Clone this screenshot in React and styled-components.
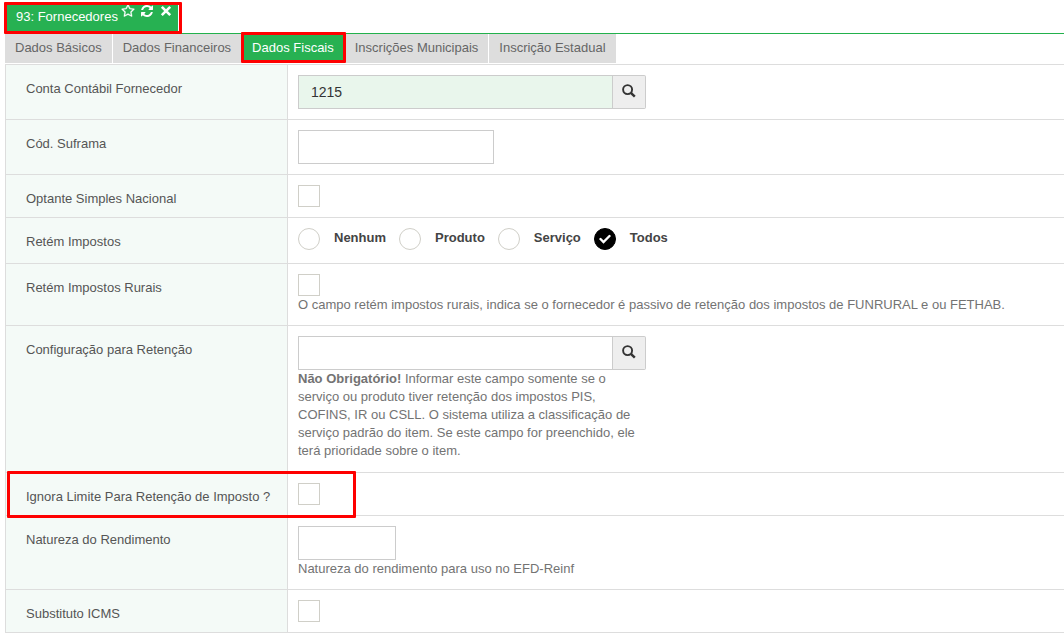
import React, { useState } from "react";
import styled, { createGlobalStyle, css } from "styled-components";

const GlobalStyle = createGlobalStyle`
  * {
    box-sizing: border-box;
  }

  body {
    margin: 0;
    background: #fff;
    color: #555;
    font-family: "Liberation Sans", Arial, sans-serif;
    font-size: 13px;
    line-height: 18px;
  }
`;

const Page = styled.div`
  padding: 4px 0 0 5px;
`;

const WindowBar = styled.header`
  display: flex;
  height: 30px;
  border-bottom: 1px solid #22b14c;
`;

const WindowTab = styled.div`
  position: relative;
  display: flex;
  padding: 0 5px 0 11px;
  background: #27b152;
  color: #fff;
`;

const WindowTitle = styled.span`
  padding-top: 4px;
  margin-right: 3px;
`;

const WindowActions = styled.div`
  display: flex;
  align-items: flex-start;
  gap: 5px;
`;

const IconButton = styled.button`
  display: flex;
  padding: 0;
  border: 0;
  background: none;
  color: inherit;
  cursor: pointer;
`;

const Highlight = styled.div`
  position: absolute;
  z-index: 1;
  inset: ${(props) => props.$inset || "-2px -4px -1px -1px"};
  ${(props) => props.$width && `width: ${props.$width};`}
  border: 3px solid #fe0000;
  border-radius: 1px;
  pointer-events: none;
`;

const TabList = styled.nav`
  display: flex;
  gap: 1px;
  margin-bottom: 1px;
`;

const Tab = styled.button`
  position: relative;
  height: 29px;
  padding: 0 10px 2px;
  border: 0;
  background: #ddd;
  color: #666;
  font: inherit;
  white-space: nowrap;
  cursor: pointer;

  ${(props) =>
    props.$active &&
    css`
      background: #27b152;
      color: #fff;
    `}
`;

const Form = styled.form`
  border-left: 1px solid #ddd;
  border-bottom: 1px solid #ddd;
`;

const Row = styled.div`
  position: relative;
  display: grid;
  grid-template-columns: 282px 1fr;
  border-top: 1px solid #ddd;
`;

const LabelCell = styled.div`
  padding: 15px 10px 0 20px;
  border-right: 1px solid #ddd;
  background: #f4faf7;
`;

const FieldCell = styled.div`
  padding: 10px;
`;

const TextInput = styled.input`
  display: block;
  width: ${(props) => props.$width};
  height: 34px;
  padding: 0 12px;
  border: 1px solid #ccc;
  border-radius: 0;
  background: ${(props) => (props.$filled ? "#e9f6ec" : "#fff")};
  color: #333;
  font: inherit;
  font-size: 14px;
  outline: none;
`;

const SearchGroup = styled.div`
  display: flex;
`;

const SearchButton = styled.button`
  display: flex;
  align-items: center;
  justify-content: center;
  width: 33px;
  height: 34px;
  padding: 0 0 2px;
  border: 1px solid #ccc;
  border-left: 0;
  border-radius: 0 2px 2px 0;
  background: #eee;
  color: #333;
  cursor: pointer;
`;

const Checkbox = styled.input`
  appearance: none;
  display: block;
  width: 22px;
  height: 22px;
  margin: 0;
  border: 1px solid #d0cfc8;
  background: #fff;

  &:checked {
    background: #000;
  }
`;

const RadioGroup = styled.div`
  display: flex;
  gap: 13px;
  height: 25px;
`;

const RadioLabel = styled.label`
  display: flex;
  align-items: flex-start;
  gap: 14px;
  color: #444;
  font-weight: bold;
  line-height: 20px;
`;

const RadioMark = styled.span`
  position: relative;
  width: 22px;
  height: 22px;

  svg {
    position: absolute;
    top: 6px;
    left: 5px;
    pointer-events: none;
  }
`;

const Radio = styled.input`
  appearance: none;
  display: block;
  width: 22px;
  height: 22px;
  margin: 0;
  border: 1px solid #d0cfc8;
  border-radius: 50%;
  background: #fff;

  &:checked {
    border-color: #000;
    background: #000;
  }
`;

const Help = styled.p`
  margin: 0;
  padding-bottom: ${(props) => (props.$narrow ? "2px" : "1px")};
  max-width: ${(props) => (props.$narrow ? "348px" : "none")};
  color: #737373;
`;

const StarIcon = () => (
  <svg width="14" height="14" viewBox="0 0 1792 1792" fill="currentColor" aria-hidden="true">
    <path
      d="M1201 1004l306-297-422-62-189-382-189 382-422 62 306 297-73 421 378-199 377 199zm527-357q0 22-26 48l-363 354 86 500q1 7 1 20 0 50-41 50-19 0-40-12l-449-236-449 236q-22 12-40 12-21 0-31.5-14.5t-10.5-35.5q0-6 2-20l86-500-364-354q-25-27-25-48 0-37 56-46l502-73 225-455q19-41 49-41t49 41l225 455 502 73q56 9 56 46z"
      stroke="currentColor"
      strokeWidth="40"
    />
  </svg>
);

const RefreshIcon = () => (
  <svg width="14" height="14" viewBox="0 0 1792 1792" fill="currentColor" aria-hidden="true">
    <path d="M1639 1056q0 5-1 7-64 268-268 434.5t-478 166.5q-146 0-282.5-55t-243.5-157l-129 129q-19 19-45 19t-45-19-19-45v-448q0-26 19-45t45-19h448q26 0 45 19t19 45-19 45l-137 137q71 66 161 102t187 36q134 0 250-65t186-179q11-17 53-117 8-23 30-23h192q13 0 22.5 9.5t9.5 22.5zm25-800v448q0 26-19 45t-45 19h-448q-26 0-45-19t-19-45 19-45l138-138q-148-137-349-137-134 0-250 65t-186 179q-11 17-53 117-8 23-30 23h-199q-13 0-22.5-9.5t-9.5-22.5v-7q65-268 270-434.5t480-166.5q146 0 284 55.5t245 156.5l130-129q19-19 45-19t45 19 19 45z" />
  </svg>
);

const CloseIcon = () => (
  <svg width="14" height="14" viewBox="0 0 14 14" fill="none" aria-hidden="true">
    <path d="M2.8 2.8L11.2 11.2M11.2 2.8L2.8 11.2" stroke="currentColor" strokeWidth="2.6" />
  </svg>
);

const SearchIcon = () => (
  <svg width="14" height="14" viewBox="0 0 14 14" fill="none" stroke="currentColor" aria-hidden="true">
    <circle cx="5.6" cy="5.6" r="4.5" strokeWidth="1.9" />
    <path d="M8.9 8.9L12.8 12.6" strokeWidth="2.5" />
  </svg>
);

const tabs = [
  "Dados Básicos",
  "Dados Financeiros",
  "Dados Fiscais",
  "Inscrições Municipais",
  "Inscrição Estadual",
];

const taxOptions = ["Nenhum", "Produto", "Serviço", "Todos"];

const Field = ({ id, label, highlighted, children }) => (
  <Row>
    <LabelCell>
      <label htmlFor={id}>{label}</label>
    </LabelCell>
    <FieldCell>{children}</FieldCell>
    {highlighted && <Highlight $inset="-2px auto -3px 1px" $width="349px" />}
  </Row>
);

const SearchField = ({ id, defaultValue }) => (
  <SearchGroup>
    <TextInput id={id} $width="315px" $filled={Boolean(defaultValue)} defaultValue={defaultValue} />
    <SearchButton type="button" aria-label="Pesquisar">
      <SearchIcon />
    </SearchButton>
  </SearchGroup>
);

const App = () => {
  const [activeTab, setActiveTab] = useState("Dados Fiscais");
  const [tax, setTax] = useState("Todos");

  return (
    <>
      <GlobalStyle />
      <Page>
        <WindowBar>
          <WindowTab>
            <WindowTitle>93: Fornecedores</WindowTitle>
            <WindowActions>
              <IconButton type="button" aria-label="Favoritar">
                <StarIcon />
              </IconButton>
              <IconButton type="button" aria-label="Atualizar">
                <RefreshIcon />
              </IconButton>
              <IconButton type="button" aria-label="Fechar">
                <CloseIcon />
              </IconButton>
            </WindowActions>
            <Highlight />
          </WindowTab>
        </WindowBar>

        <TabList>
          {tabs.map((tab) => (
            <Tab
              key={tab}
              type="button"
              $active={tab === activeTab}
              onClick={() => setActiveTab(tab)}
            >
              {tab}
              {tab === activeTab && <Highlight $inset="-2px -2px 0 -1px" />}
            </Tab>
          ))}
        </TabList>

        <Form>
          <Field id="conta" label="Conta Contábil Fornecedor">
            <SearchField id="conta" defaultValue="1215" />
          </Field>
          <Field id="suframa" label="Cód. Suframa">
            <TextInput id="suframa" $width="196px" />
          </Field>
          <Field id="simples" label="Optante Simples Nacional">
            <Checkbox id="simples" type="checkbox" />
          </Field>
          <Row>
            <LabelCell id="impostos">Retém Impostos</LabelCell>
            <FieldCell>
              <RadioGroup role="radiogroup" aria-labelledby="impostos">
                {taxOptions.map((option) => (
                  <RadioLabel key={option}>
                    <RadioMark>
                      <Radio
                        type="radio"
                        name="impostos"
                        checked={tax === option}
                        onChange={() => setTax(option)}
                      />
                      {tax === option && (
                        <svg width="12" height="10" viewBox="0 0 12 10" fill="none">
                          <path
                            d="M1.5 5L4.5 8L10.5 2"
                            stroke="#fff"
                            strokeWidth="2.4"
                            strokeLinecap="round"
                          />
                        </svg>
                      )}
                    </RadioMark>
                    {option}
                  </RadioLabel>
                ))}
              </RadioGroup>
            </FieldCell>
          </Row>
          <Field id="rurais" label="Retém Impostos Rurais">
            <Checkbox id="rurais" type="checkbox" />
            <Help>
              O campo retém impostos rurais, indica se o fornecedor é passivo de retenção dos
              impostos de FUNRURAL e ou FETHAB.
            </Help>
          </Field>
          <Field id="retencao" label="Configuração para Retenção">
            <SearchField id="retencao" />
            <Help $narrow>
              <strong>Não Obrigatório!</strong> Informar este campo somente se o serviço ou produto
              tiver retenção dos impostos PIS, COFINS, IR ou CSLL. O sistema utiliza a
              classificação de serviço padrão do item. Se este campo for preenchido, ele terá
              prioridade sobre o item.
            </Help>
          </Field>
          <Field id="limite" label="Ignora Limite Para Retenção de Imposto ?" highlighted>
            <Checkbox id="limite" type="checkbox" />
          </Field>
          <Field id="natureza" label="Natureza do Rendimento">
            <TextInput id="natureza" $width="98px" />
            <Help>Natureza do rendimento para uso no EFD-Reinf</Help>
          </Field>
          <Field id="icms" label="Substituto ICMS">
            <Checkbox id="icms" type="checkbox" />
          </Field>
        </Form>
      </Page>
    </>
  );
};

export default App;
